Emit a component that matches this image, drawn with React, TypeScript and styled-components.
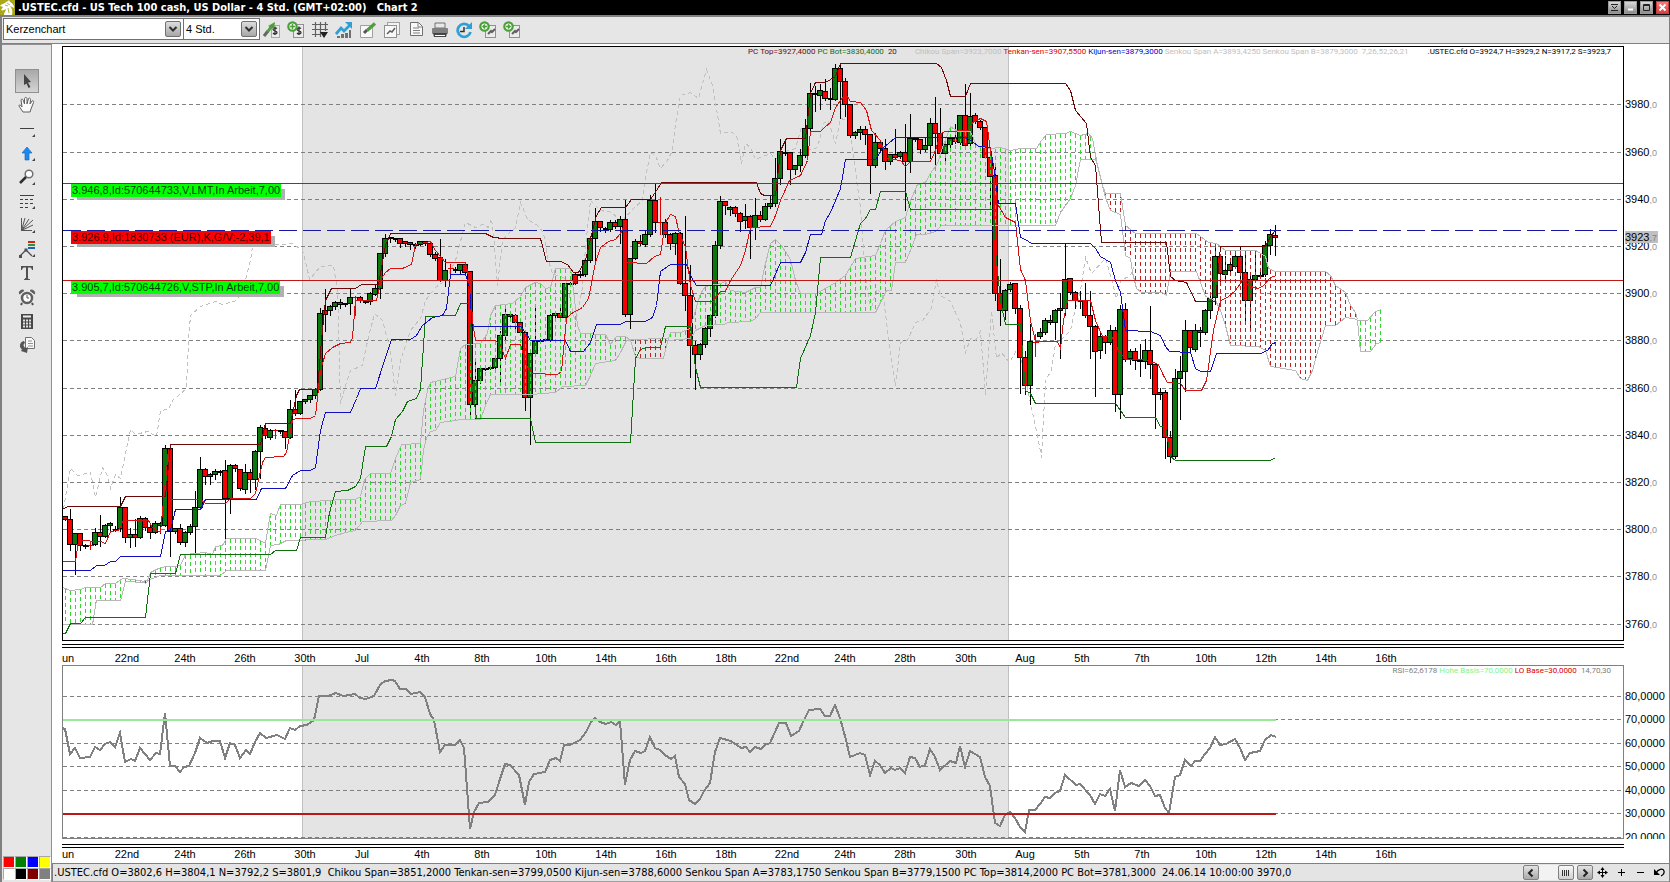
import React from "react";
import styled, { createGlobalStyle, css } from "styled-components";

const GlobalStyle = createGlobalStyle`
  * { box-sizing: border-box; }
  body { margin: 0; background: #ffffff; font-family: "Liberation Sans", Arial, sans-serif; font-size: 11px; color: #000; }
  button, select { font-family: inherit; }
`;

/* ---------- chart data ---------- */

const PLOT_LEFT = 62;
const PRICE_TOP = 46;
const RSI_TOP = 665;
const FIRST_BAR = 65;
const BAR_STEP = 5;

/* high, body top, body bottom, low, kind (u up, d down, x cross); eight bars a line */
const CANDLES = `
515 516 519 519 d|508 519 544 549 d|532 533 544 573 u|532 533 545 549 d|543 545 545 547 u|541 545 545 549 x|527 532 544 544 u|514 532 536 545 d
523 525 536 536 u|521 523 525 530 u|525 529 529 530 u|496 507 528 530 u|507 507 537 541 d|527 534 537 546 u|518 534 537 545 d|515 518 537 537 u
516 518 527 529 d|524 527 532 537 d|520 523 532 532 u|521 523 525 532 u|444 448 525 525 u|447 448 531 555 d|527 528 531 532 u|523 528 542 543 d
530 532 542 545 u|523 526 532 533 u|490 507 526 551 u|456 469 507 507 u|467 469 476 483 d|472 474 476 483 u|468 471 474 478 u|469 471 471 474 u
459 470 498 538 d|463 465 498 512 u|463 465 468 470 d|468 469 488 489 d|463 472 489 492 u|468 472 479 491 d|449 451 479 488 u|424 427 451 477 u
423 428 435 437 d|428 430 437 438 u|428 430 430 438 x|429 430 430 432 u|430 431 437 447 d|399 409 437 437 u|389 409 413 414 d|400 401 413 413 u
398 399 401 402 u|394 395 399 401 u|387 389 395 397 u|307 313 389 389 u|288 310 314 330 d|304 306 310 314 u|300 302 306 308 u|298 302 304 307 d
302 303 304 305 u|288 297 303 313 u|295 297 297 315 x|295 297 300 301 d|299 301 301 302 d|291 293 301 303 u|283 288 294 294 u|252 253 288 297 u
233 238 253 255 u|236 237 237 241 u|237 238 238 240 u|237 238 243 246 d|240 241 243 245 d|241 242 244 248 d|242 244 244 247 u|240 241 244 244 u
240 241 243 244 d|241 243 254 255 d|251 254 258 259 d|238 257 280 280 d|258 270 280 285 u|263 268 268 274 x|266 269 269 271 u|263 264 270 272 u
262 264 272 272 d|271 271 404 416 d|360 380 404 418 u|367 368 380 382 u|367 368 368 369 u|365 367 367 368 u|357 358 367 368 u|330 335 358 382 u
307 314 335 338 u|312 314 316 317 d|313 315 322 327 d|320 322 332 333 d|332 332 397 409 d|352 353 397 443 u|305 341 353 354 u|338 340 340 342 u
337 339 339 340 u|313 315 339 340 u|312 313 315 318 u|303 313 317 317 d|282 283 317 318 u|281 283 283 285 u|271 274 283 283 d|270 274 274 276 u
258 260 274 275 u|237 238 260 261 u|207 221 238 260 u|220 221 227 230 d|226 228 228 231 u|219 222 229 230 u|219 222 226 227 d|215 219 226 242 u
199 219 314 315 d|257 258 314 327 u|238 241 258 258 u|234 241 243 244 d|230 234 244 245 u|194 200 234 235 u|183 200 222 231 d|196 222 222 234 x
218 222 234 236 d|232 234 243 248 d|231 233 243 253 u|231 233 283 283 d|215 283 295 309 d|264 295 345 376 d|340 345 354 388 d|342 344 354 358 u
326 328 344 346 u|313 315 328 335 u|240 245 315 316 u|195 201 245 247 u|200 201 205 213 d|205 207 209 214 u|205 207 213 215 d|211 213 221 230 d
203 216 220 227 u|214 216 227 257 d|197 215 227 238 u|210 215 219 220 d|202 206 219 219 u|194 203 206 207 u|157 178 203 205 u|138 151 178 183 u
138 152 152 154 d|151 152 169 183 d|164 165 169 173 u|148 155 165 170 u|118 128 155 156 u|82 93 128 132 u|85 93 93 110 u|83 90 95 108 u
78 91 98 99 d|87 98 98 108 u|63 68 99 99 u|63 68 81 117 d|77 81 104 115 d|103 104 135 136 d|130 132 135 137 u|125 129 132 138 u
125 129 134 143 d|134 134 165 192 d|132 142 165 166 u|140 142 148 149 d|138 148 161 168 d|153 154 161 163 u|128 154 157 158 d|150 152 156 157 u
123 152 161 209 d|113 138 161 171 u|136 138 138 140 u|138 139 149 152 d|137 145 149 150 u|117 123 145 157 u|96 123 133 163 d|107 133 153 153 d
142 144 153 161 u|135 138 144 146 u|123 138 141 142 d|114 115 142 143 u|83 115 145 148 d|92 116 143 144 u|112 115 121 122 d|119 121 127 128 d
126 127 157 157 d|155 157 176 203 d|163 175 293 299 d|258 293 310 324 d|288 290 310 318 u|281 284 289 290 u|282 283 308 312 d|304 308 357 392 d
350 357 385 393 d|323 341 385 403 u|333 342 342 356 x|327 332 336 337 u|317 320 332 333 u|314 320 322 323 d|308 310 322 338 u|292 308 310 357 u
242 279 308 314 u|278 278 292 293 d|290 292 300 307 d|290 300 300 307 u|282 300 315 316 d|290 315 326 357 d|324 326 351 395 d|330 336 350 357 u
334 336 342 352 d|324 330 342 343 u|326 330 394 410 d|304 309 394 417 u|302 309 359 360 d|348 351 358 363 u|347 351 360 368 d|343 360 361 375 u
338 350 361 367 u|305 350 364 377 d|362 364 394 427 d|387 392 394 398 u|389 392 437 457 d|430 437 456 461 d|368 378 456 457 u|355 371 378 418 u
319 330 371 390 u|329 330 347 352 d|323 330 349 350 u|326 330 332 345 d|308 310 332 333 u|295 298 310 317 u|243 256 297 303 u|255 256 273 283 d
255 270 274 277 u|260 264 270 272 u|254 256 266 267 u|245 256 272 277 d|254 272 300 321 d|274 279 300 327 u|254 275 279 281 u|268 275 275 276 u
240 245 274 275 u|228 234 245 253 u|224 235 237 254 d
`;

type Candle = { x: number; high: number; top: number; bottom: number; low: number; kind: string };

const candles: Candle[] = CANDLES.trim()
  .split(/[\n|]/)
  .map((row, i) => {
    const [high, top, bottom, low, kind] = row.trim().split(" ");
    return { x: FIRST_BAR + i * BAR_STEP, high: +high, top: +top, bottom: +bottom, low: +low, kind };
  });

const PC_TOP =
  "62,509 67,506 120,506 125,496 165,496 170,444 260,444 265,423 290,423 296,395 299,389 317,389 321,340 325,300 331,288 355,288 361,284 378,284 385,245 390,233 485,233 493,237 503,238 540,238 546,261 560,261 567,264 573,272 578,272 585,260 590,238 596,215 601,207 625,207 631,199 650,199 658,187 661,182 756,182 760,193 764,195 775,195 780,150 786,138 805,138 810,93 815,82 825,82 835,76 840,63 936,63 941,67 946,80 950,96 965,96 970,83 1065,83 1070,90 1075,110 1086,123 1090,157 1095,165 1101,242 1166,242 1170,276 1175,280 1186,282 1195,301 1215,301 1220,246 1265,246 1270,236 1275,230";
const PC_BOT =
  "62,633 65,633 70,623 80,623 85,617 145,617 150,573 175,573 180,554 270,554 275,550 296,550 300,537 325,537 329,512 335,491 347,490 355,486 360,478 365,446 386,446 391,436 395,419 402,411 407,401 416,398 420,389 425,316 455,315 460,303 469,303 471,380 476,418 530,418 535,442 630,442 635,358 640,349 646,347 660,347 665,326 690,326 695,367 700,387 796,387 800,358 810,335 815,312 820,257 850,257 855,240 860,223 865,218 870,209 875,209 880,191 905,191 910,209 993,209 995,250 1000,300 1005,324 1020,324 1025,390 1030,393 1035,403 1115,403 1120,410 1125,417 1155,417 1160,426 1165,427 1170,456 1175,460 1270,460 1275,457";
const TENKAN =
  "62,561 75,561 78,540 100,541 105,543 110,531 118,530 122,521 127,520 148,520 152,527 160,532 163,500 168,449 170,499 200,499 205,503 225,503 230,498 250,498 255,493 262,462 265,457 283,456 286,452 292,420 295,418 310,418 315,415 320,370 325,353 332,347 340,343 350,342 352,337 355,300 376,300 381,278 385,272 390,268 402,268 411,264 415,244 430,241 435,250 445,262 465,262 470,285 472,320 475,340 495,340 500,345 505,358 510,344 520,344 526,365 532,373 557,374 561,371 566,318 571,313 582,307 588,298 595,262 600,247 608,241 615,239 620,233 624,225 626,262 646,263 654,256 660,254 665,222 670,214 675,216 678,230 685,247 690,285 695,301 712,301 716,296 720,291 725,291 730,280 740,265 745,250 750,227 770,226 775,215 780,200 789,180 800,175 807,160 810,131 820,131 825,126 830,122 835,107 845,93 850,101 860,102 866,110 871,130 880,140 886,158 900,160 905,166 910,161 930,161 935,150 940,133 945,131 968,130 972,122 980,118 986,121 990,150 995,200 1005,217 1015,222 1020,269 1025,280 1030,320 1035,341 1057,341 1060,348 1063,320 1067,300 1090,300 1095,320 1102,336 1112,337 1118,350 1125,359 1145,359 1158,364 1163,375 1167,382 1180,383 1185,390 1201,390 1206,380 1213,330 1220,300 1227,297 1235,290 1242,280 1250,286 1258,288 1263,285 1270,277 1276,275";
const KIJUN =
  "62,570 90,570 96,565 104,565 110,561 115,561 120,556 160,556 165,531 170,530 175,509 200,509 205,499 256,499 261,488 285,488 292,475 300,470 310,470 315,467 320,430 325,412 350,412 356,398 360,388 375,388 384,360 391,339 410,339 416,335 422,325 432,317 442,315 446,308 450,274 465,274 470,290 471,326 520,326 525,332 530,340 565,340 570,351 583,351 590,342 596,324 620,324 625,321 645,321 652,317 656,305 660,271 670,264 686,264 690,275 696,285 770,285 780,262 800,262 805,252 810,234 821,234 825,220 830,212 835,200 840,188 845,159 875,159 882,148 895,137 965,137 972,141 978,146 990,147 993,165 998,203 1015,203 1020,237 1025,239 1031,243 1090,243 1095,248 1100,256 1110,262 1115,280 1120,292 1125,330 1150,331 1160,335 1165,346 1169,351 1190,352 1195,368 1200,371 1210,371 1216,353 1260,353 1267,350 1272,343 1276,342";
const CHIKOU =
  "62,515 66,490 70,468 77,475 90,472 95,497 102,467 107,475 110,488 115,474 120,478 125,453 130,429 135,434 147,431 156,436 160,410 168,409 172,400 186,388 188,340 190,315 200,306 215,301 222,304 236,300 243,287 250,260 252,246 280,244 292,243 302,250 306,265 309,279 320,266 333,265 337,290 340,403 345,385 350,370 362,365 366,345 374,313 382,320 390,350 395,395 400,360 410,330 420,318 425,300 435,287 445,280 455,260 465,222 475,227 482,224 488,227 491,218 494,245 497,285 502,240 508,233 515,227 520,202 527,219 537,225 543,232 547,257 552,273 565,278 575,323 582,287 585,247 590,200 600,210 612,212 620,222 633,208 642,200 645,177 650,152 655,155 660,168 667,160 672,150 675,123 680,95 690,92 698,98 706,69 712,85 715,102 720,133 730,131 736,135 741,163 745,143 750,147 755,159 770,153 775,159 781,152 795,148 801,127 807,150 817,147 823,123 828,120 835,143 840,118 848,120 853,157 860,207 865,277 870,310 877,288 883,297 888,337 895,385 900,342 907,340 915,322 922,320 931,308 936,279 940,295 950,301 960,323 965,352 970,338 975,340 980,331 985,395 991,310 996,358 1001,352 1009,362 1016,350 1022,363 1030,403 1037,435 1041,457 1045,380 1051,370 1055,343 1060,340 1070,330 1075,308 1080,290 1085,257 1091,273 1105,258 1110,275 1116,298 1120,280 1130,275 1133,267";

type Cloud = { bullish: boolean; upper: string; lower: string };

const CLOUDS: Cloud[] = [
  {
    bullish: true,
    upper: "62,587 70,590 80,589 85,587 100,587 105,583 115,583 122,578 132,579 145,581",
    lower: "62,624 92,624 96,600 120,600 125,581 144,582",
  },
  { bullish: false, upper: "143,580 147,580", lower: "143,581 145,583 147,581" },
  {
    bullish: true,
    upper:
      "147,580 150,572 158,568 165,566 175,566 180,565 185,554 205,552 212,554 215,546 222,545 226,538 255,538 262,541 265,543 270,513 276,515 280,504 300,504 310,501 330,500 340,499 355,499 360,496 364,479 370,473 390,473 395,458 401,444 420,443 423,410 427,390 430,382 455,376 460,348 465,344 480,343 487,333 490,315 495,305 512,303 520,296 525,287 535,282 540,283 545,288 550,287 555,268 570,268 573,290 577,325 580,333 605,334 610,344 616,336 625,336 630,340",
    lower:
      "147,580 160,575 220,575 226,570 265,570 270,545 278,544 286,540 325,539 335,535 345,532 355,530 362,521 391,520 395,515 400,505 405,503 410,482 420,479 423,450 426,437 430,431 435,430 440,422 455,420 460,419 480,419 485,405 490,394 530,394 555,392 562,386 585,385 590,375 595,363 615,360 620,352 626,340 630,340",
  },
  { bullish: false, upper: "630,339 665,338 668,338", lower: "630,340 635,356 640,358 663,358 668,338" },
  {
    bullish: true,
    upper:
      "668,338 670,332 680,332 690,328 695,310 700,293 705,286 720,283 725,281 730,290 745,292 755,287 760,287 764,267 770,243 775,239 780,244 785,251 790,259 795,280 800,293 816,293 825,288 835,282 845,275 855,258 875,255 880,243 885,230 895,221 905,217 910,200 917,184 925,182 930,173 937,163 942,147 950,126 957,131 970,131 976,145 990,148 1000,147 1010,150 1020,148 1036,148 1041,140 1046,134 1065,133 1070,131 1080,135 1088,133 1092,138 1097,165",
    lower:
      "668,340 690,338 695,330 705,325 723,324 728,322 750,321 755,318 760,312 875,312 880,302 886,290 891,290 895,262 905,262 912,245 916,234 925,234 935,231 941,225 1055,225 1060,212 1070,198 1075,185 1080,159 1095,159 1097,165",
  },
  {
    bullish: false,
    upper:
      "1097,165 1102,185 1105,193 1120,193 1125,225 1135,233 1196,233 1208,242 1216,243 1225,250 1255,250 1262,254 1265,256 1268,268 1275,271 1325,271 1330,275 1335,285 1345,292 1350,305 1355,312 1357,319",
    lower:
      "1097,165 1105,197 1110,210 1120,214 1125,255 1130,258 1132,272 1136,288 1141,292 1162,292 1166,295 1170,271 1196,271 1205,296 1215,300 1220,310 1225,325 1230,345 1258,346 1265,350 1270,366 1295,370 1300,378 1307,380 1312,370 1318,348 1325,325 1335,325 1345,317 1357,319",
  },
  {
    bullish: true,
    upper: "1357,320 1367,320 1375,311 1381,309",
    lower: "1357,320 1360,351 1370,351 1376,343 1381,342",
  },
];

const RSI =
  "62,728 65,729 70,754 75,748 80,758 90,757 95,747 100,750 105,744 110,742 115,747 120,733 125,762 131,759 135,761 140,748 145,754 150,760 156,753 160,754 165,713 170,766 175,766 180,772 184,767 189,766 195,753 200,738 207,743 213,741 220,741 225,758 230,743 235,745 240,758 246,750 250,754 255,742 260,733 266,738 277,735 285,739 290,728 295,730 300,726 307,725 314,720 319,696 328,696 336,693 343,696 355,694 360,698 366,699 374,696 380,685 385,681 392,680 395,681 400,689 406,689 411,694 420,692 425,697 430,714 434,720 440,752 445,745 455,745 460,740 464,748 470,829 474,812 479,803 488,802 495,795 500,779 505,764 510,765 519,775 525,805 529,782 534,774 545,772 550,760 556,758 560,761 564,745 570,745 580,740 586,732 591,722 595,718 600,722 606,724 611,722 616,725 620,721 625,785 630,760 635,751 641,753 645,751 650,737 655,748 660,750 665,755 671,759 675,756 679,777 685,784 689,800 695,804 700,799 704,791 710,783 715,752 720,738 731,741 741,748 746,747 750,752 755,747 761,749 765,745 770,743 779,723 786,723 791,736 799,731 804,720 809,710 820,709 825,716 830,716 835,705 840,718 846,740 850,757 860,753 865,755 870,775 875,761 880,765 885,773 891,768 895,770 900,768 905,773 910,757 915,758 920,767 925,765 930,749 935,757 940,770 950,761 956,763 960,746 965,767 970,751 980,757 985,777 990,786 995,823 1000,826 1005,815 1010,812 1015,818 1020,827 1025,832 1029,810 1035,810 1040,804 1045,797 1050,798 1055,793 1060,791 1065,775 1076,785 1080,784 1090,795 1095,804 1100,794 1105,796 1110,789 1115,811 1120,770 1125,787 1131,783 1139,786 1145,780 1150,786 1155,796 1160,795 1165,808 1169,813 1175,777 1180,775 1185,760 1191,766 1195,761 1200,761 1205,754 1210,748 1215,737 1220,745 1226,744 1235,739 1240,748 1245,760 1250,753 1260,751 1265,740 1271,735 1276,737";

const PRICE_TICKS: [string, number][] = [
  ["3980", 104], ["3960", 152], ["3940", 199], ["3920", 246], ["3900", 293], ["3880", 340],
  ["3860", 388], ["3840", 435], ["3820", 482], ["3800", 529], ["3780", 576], ["3760", 624],
];
const RSI_TICKS: [string, number][] = [
  ["80,0000", 696], ["70,0000", 719], ["60,0000", 743], ["50,0000", 766], ["40,0000", 790], ["30,0000", 813], ["20,0000", 837],
];
const DATE_TICKS: [string, number][] = [
  ["un", 68], ["22nd", 127], ["24th", 185], ["26th", 245], ["30th", 305], ["Jul", 362], ["4th", 422], ["8th", 482],
  ["10th", 546], ["14th", 606], ["16th", 666], ["18th", 726], ["22nd", 787], ["24th", 845], ["28th", 905],
  ["30th", 966], ["Aug", 1025], ["5th", 1082], ["7th", 1142], ["10th", 1206], ["12th", 1266], ["14th", 1326], ["16th", 1386],
];

const parsePoints = (s: string) => s.split(" ").map((p) => p.split(",").map(Number));

const valueAt = (pts: number[][], x: number) => {
  for (let i = 1; i < pts.length; i++) {
    const [x0, y0] = pts[i - 1];
    const [x1, y1] = pts[i];
    if (x >= x0 && x <= x1) return x1 === x0 ? y1 : y0 + ((y1 - y0) * (x - x0)) / (x1 - x0);
  }
  return null;
};

/* ---------- window chrome ---------- */

const Window = styled.div`
  min-height: 100vh;
  display: flex;
  flex-direction: column;
  background: #fff;
  overflow: hidden;
`;

const TitleBar = styled.header`
  height: 15px;
  display: flex;
  align-items: center;
  gap: 3px;
  background: #000;
  color: #fff;
`;

const Title = styled.h1`
  flex: 1;
  margin: 0;
  font-family: "DejaVu Sans Condensed", "DejaVu Sans", sans-serif;
  font-stretch: condensed;
  font-size: 11px;
  line-height: 15px;
  font-weight: bold;
  white-space: pre;
`;

const WindowButtons = styled.div`
  display: flex;
  gap: 3px;
  padding-right: 1px;
`;

const WindowButton = styled.button<{ $danger?: boolean }>`
  width: 13px;
  height: 13px;
  padding: 0;
  display: grid;
  place-items: center;
  border: 1px solid ${(p) => (p.$danger ? "#c43c3c" : "#9a9a9a")};
  background: ${(p) => (p.$danger ? "linear-gradient(#f08080, #d84040)" : "linear-gradient(#d8d8d8, #8c8c8c)")};
`;

const Toolbar = styled.div`
  height: 29px;
  display: flex;
  align-items: flex-start;
  background: #e6e6e6;
  border: 2px solid #808080;
  border-right-width: 1px;
  border-bottom-width: 1px;
  padding: 1px 0 0 1px;
`;

const SelectBox = styled.div<{ $width: number }>`
  position: relative;
  width: ${(p) => p.$width}px;
  height: 22px;
  border: 1px solid #707070;
  margin-right: -1px;
  background: #fff;
`;

const Select = styled.select`
  appearance: none;
  width: 100%;
  height: 20px;
  border: 0;
  padding: 0 20px 0 2px;
  background: transparent;
  font-size: 11px;
  line-height: 20px;
  color: #000;
  border-radius: 0;
`;

const SelectArrow = styled.span`
  position: absolute;
  right: 2px;
  top: 2px;
  width: 16px;
  height: 16px;
  display: grid;
  place-items: center;
  border: 1px solid #707070;
  border-radius: 2px;
  background: linear-gradient(#dcdcdc, #a8a8a8);
  pointer-events: none;
`;

const ToolButtons = styled.div`
  display: flex;
  padding-left: 1px;
`;

const ToolButton = styled.button<{ $active?: boolean }>`
  width: 24px;
  height: 24px;
  padding: 0;
  display: grid;
  place-items: center;
  border: 1px solid transparent;
  background: none;
  ${(p) =>
    p.$active &&
    css`
      border-color: #909090;
      background: linear-gradient(#a8a8a8, #d4d4d4);
    `}
`;

const Body = styled.div`
  flex: 1;
  display: flex;
  border-left: 2px solid #808080;
  border-right: 1px solid #808080;
`;

const Rail = styled.aside`
  width: 50px;
  flex: none;
  display: flex;
  flex-direction: column;
  justify-content: space-between;
  background: #e6e6e6;
  border-right: 1px solid #909090;
  border-top: 1px solid #909090;
`;

const RailTools = styled.div`
  display: flex;
  flex-direction: column;
  align-items: center;
  padding-top: 24px;
`;

const Palette = styled.div`
  display: grid;
  grid-template-columns: repeat(4, 12px);
  padding: 0 0 2px 1px;
`;

const Swatch = styled.button<{ $color: string }>`
  height: 12px;
  padding: 0;
  border: 1px solid #a8a8a8;
  border-right-color: #fff;
  border-bottom-color: #fff;
  background: ${(p) => p.$color};
`;

const Main = styled.main`
  flex: 1;
  min-width: 0;
  display: flex;
  flex-direction: column;
`;

const Charts = styled.div`
  flex: 1;
  padding: 2px 0 0 10px;
`;

const Pane = styled.section`
  display: grid;
  grid-template-columns: minmax(0, 1fr) 45px;
`;

const PlotArea = styled.div<{ $height: number; $line: string }>`
  position: relative;
  height: ${(p) => p.$height}px;
  border: 1px solid ${(p) => p.$line};
`;

const PlotSvg = styled.svg`
  display: block;
  width: 100%;
  height: 100%;
`;

const AxisSvg = styled.svg`
  display: block;
  width: 45px;
  height: 100%;
`;

const Splitter = styled.div<{ $gap: number }>`
  height: 4px;
  margin: ${(p) => p.$gap}px 45px 0 0;
  border-top: 1px solid #000;
  border-bottom: 1px solid #000;
`;

const DateSvg = styled.svg<{ $height: number }>`
  display: block;
  width: 100%;
  height: ${(p) => p.$height}px;
`;

const Legend = styled.div`
  position: absolute;
  top: 0;
  right: 12px;
  display: flex;
  gap: 2px;
  font-family: Roboto, "Liberation Sans", sans-serif;
  font-size: 8px;
  line-height: 10px;
  white-space: pre;
`;

const LegendItem = styled.span<{ $color: string; $space?: number }>`
  color: ${(p) => p.$color};
  margin-left: ${(p) => p.$space ?? 0}px;
`;

const OrderTag = styled.button<{ $top: number; $color: string }>`
  position: absolute;
  left: 8px;
  top: ${(p) => p.$top}px;
  height: 13px;
  padding: 0 1px;
  border: 0;
  background: ${(p) => p.$color};
  box-shadow: 5px 4px 0 -1px #b0b0b0;
  font-size: 11px;
  line-height: 13px;
  white-space: nowrap;
  color: rgba(0, 0, 0, 0.8);
`;

const StatusBar = styled.footer`
  height: 19px;
  display: flex;
  align-items: center;
  border-top: 1px solid #808080;
  border-left: 1px solid #808080;
  border-bottom: 1px solid #a0a0a0;
  background: #e4e4e4;
`;

const StatusText = styled.div`
  flex: 1;
  padding-left: 1px;
  font-family: "DejaVu Sans Condensed", "DejaVu Sans", sans-serif;
  font-stretch: condensed;
  font-size: 11px;
  line-height: 17px;
  white-space: pre;
  overflow: hidden;
`;

const ScrollBar = styled.div`
  display: flex;
  align-items: center;
  width: 70px;
  height: 15px;
  background: #f2f2f2;
`;

const ScrollButton = styled.button`
  width: 16px;
  height: 15px;
  padding: 0;
  display: grid;
  place-items: center;
  border: 1px solid #808080;
  border-radius: 2px;
  background: linear-gradient(#e4e4e4, #a8a8a8);
`;

const ScrollThumb = styled(ScrollButton)`
  margin: 0 3px 0 auto;
  background: linear-gradient(#f8f8f8, #d0d0d0);
`;

const StatusButton = styled.button`
  width: 19px;
  height: 17px;
  padding: 0;
  display: grid;
  place-items: center;
  border: 0;
  background: none;
`;

/* ---------- icons ---------- */

const Icon = ({ size = 18, children }: { size?: number; children: React.ReactNode }) => (
  <svg width={size} height={size} viewBox={`0 0 ${size} ${size}`} fill="none" aria-hidden="true">
    {children}
  </svg>
);

const Caret = () => (
  <Icon size={10}>
    <path d="M1.500 3 L5 6.500 L8.500 3" stroke="#303030" strokeWidth="2" />
  </Icon>
);

const More = () => <path d="M17 14v3h-3z" fill="#404040" />;

const Sheet = () => <rect x="6.500" y="4.500" width="10" height="12" fill="#ececec" stroke="#909090" />;

const Dollar = () => (
  <path
    d="M14 7.500c-1-1-4-1-4 .8 0 2 4 1.200 4 3.200 0 1.800-3 1.800-4 .5M12 5.500v8.500"
    stroke="#333"
    strokeWidth="1.300"
  />
);

const GreenRing = ({ children }: { children?: React.ReactNode }) => (
  <>
    <circle cx="5.500" cy="5.500" r="4.200" fill="#f4faf0" stroke="#4ca03c" strokeWidth="2.200" />
    {children}
  </>
);

const toolbarIcons: [string, React.ReactNode][] = [
  ["Order", <><rect x="8.500" y="4.500" width="8" height="12" fill="#ececec" stroke="#aaa" /><Dollar /><path d="M1 15l4-5" stroke="#666" strokeWidth="3" /><path d="M4.500 11L8 6" stroke="#4ca03c" strokeWidth="3" /><path d="M5 5l7-4-1 7z" fill="#4ca03c" /></>],
  ["Add order", <><rect x="6.500" y="3.500" width="10" height="13" fill="#ececec" stroke="#909090" /><Dollar /><GreenRing><path d="M5.500 3v5M3 5.500h5" stroke="#4ca03c" strokeWidth="1.500" /></GreenRing></>],
  ["Grid", <><path d="M4.500 1v15M9.500 1v15M14.500 1v9M1 3.500h16M1 8.500h16M1 13.500h9" stroke="#606060" strokeWidth="1.200" /><path d="M9 11h8l-4 6z" fill="#222" /></>],
  ["Indicators", <><path d="M2 17v-2h3v2zM6 17v-4h3v4zM10 17v-5h3v5zM14 17V9h2v8z" fill="#707070" /><path d="M1 13l5-6 3 3 6-6" stroke="#2f9fd8" strokeWidth="2.800" /><path d="M10 1h7v7z" fill="#2f9fd8" /></>],
  ["Edit", <><path d="M1.500 4.500h12v12h-12z" fill="#f8f8f8" stroke="#a0a0a0" /><path d="M5 12l3-3" stroke="#555" strokeWidth="3" /><path d="M8 9.500l8-7" stroke="#4ca03c" strokeWidth="3.200" /></>],
  ["Charts", <><rect x="4.500" y="1.500" width="12" height="12" fill="#f2f2f2" stroke="#a0a0a0" /><rect x="1.500" y="4.500" width="12" height="12" fill="#f8f8f8" stroke="#909090" /><path d="M4 13l3-3 2 1 3-4" stroke="#606060" strokeWidth="1.500" /></>],
  ["Copy", <><path d="M3.500 1.500h8l4 4v9h-12z" fill="#f8f8f8" stroke="#707070" /><path d="M11 2v4h4M6 7h6M6 9.500h7M6 12h7" stroke="#808080" /></>],
  ["Print", <><path d="M4 2h10v5H4z" fill="#e8e8e8" stroke="#707070" /><rect x="1" y="7" width="16" height="6" rx="1" fill="#808080" /><path d="M2 12h14l-1 4H3z" fill="#444" /><path d="M4 14.500h10" stroke="#fff" /></>],
  ["Refresh", <><path d="M14 5a6.500 6.500 0 1 0 1.500 6" stroke="#2f9fd8" strokeWidth="2.800" /><path d="M17 1v7h-7z" fill="#2f9fd8" /><path d="M9 6v4.500H5" stroke="#333" strokeWidth="1.500" /></>],
  ["Add chart", <><Sheet /><path d="M9 13l3-3 1 1 3-3" stroke="#606060" strokeWidth="2" /><GreenRing><path d="M8 5.500H4M6 3.500l-2 2 2 2" stroke="#4ca03c" strokeWidth="1.500" /></GreenRing></>],
  ["Next chart", <><Sheet /><path d="M9 13l3-3 1 1 3-3" stroke="#606060" strokeWidth="2" /><GreenRing><path d="M3 5.500h4M5 3.500l2 2-2 2" stroke="#4ca03c" strokeWidth="1.500" /></GreenRing></>],
];

const railIcons: [string, React.ReactNode][] = [
  ["Pointer", <path d="M6 2l7 8-3 .5 2.500 4.500-2 1-2-4.500L6 13z" fill="#444" />],
  ["Hand", <path d="M5 16l-4-6c0-2 2-1 3 1L3 4c.5-1.500 2-1 2.500 1l1 3L6.500 2.500C7 1 8.500 1 9 2.500V8l1.500-5.500C11 1.500 12.500 2 12.500 3.500L12 8l2-3c1-1 2 0 1.500 1.500L13 13l-1 3z" fill="#fafafa" stroke="#606060" />],
  ["Line", <><path d="M2 8.500h14" stroke="#404040" /><More /></>],
  ["Arrow", <><path d="M9 3l5 6h-3v7H7V9H4z" fill="#1e88ee" stroke="#1560b8" strokeWidth=".6" /><More /></>],
  ["Zoom", <><circle cx="11" cy="6" r="3.800" fill="#fff" stroke="#707070" strokeWidth="1.500" /><path d="M8 9l-6 6" stroke="#303030" strokeWidth="2.500" /><More /></>],
  ["Levels", <><path d="M2 3.500h14" stroke="#404040" /><path d="M2 7.500h14M2 11.500h14M2 15.500h10" stroke="#404040" strokeDasharray="3 2" /><More /></>],
  ["Fan", <><path d="M3.500 2v12.500H14M3.500 14.500L7 2M3.500 14.500L11 3M3.500 14.500L15 4M3.500 14.500L15 9" stroke="#555" /><More /></>],
  ["Pattern", <><path d="M10 1h7v2h-7z" fill="#d82020" /><path d="M10 4h7v2h-7z" fill="#209840" /><path d="M10 7h7v2h-7z" fill="#2060c0" /><path d="M2 16l6-6 6 6" stroke="#505050" strokeWidth="1.300" /><path d="M1 15h3v3H1zM6.500 8.500h3v3h-3z" fill="#505050" /><More /></>],
  ["Text", <path d="M3 2h12v4h-1c-.5-2-1-2.500-3-2.500H10V14c0 1 .5 1 2 1.200V16H6v-.8c1.500-.2 2-.2 2-1.200V3.500H7C5 3.500 4.500 4 4 6H3z" fill="#505050" />],
  ["Alarm", <><circle cx="9" cy="10" r="5" fill="#fff" stroke="#606060" strokeWidth="2.500" /><path d="M9 7v3h2" stroke="#505050" /><path d="M1.500 6A3 3 0 0 1 6 2.500zM16.500 6A3 3 0 0 0 12 2.500z" fill="#606060" stroke="#606060" /><path d="M4 15l-1 2M14 15l1 2" stroke="#505050" strokeWidth="2" /></>],
  ["Calculator", <><rect x="3" y="2" width="12" height="15" fill="#484848" /><path d="M5 4.500h8" stroke="#eee" strokeWidth="2" /><path d="M5 8.500h8M5 11.500h8M5 14.500h8" stroke="#e4e4e4" strokeWidth="1.800" strokeDasharray="2 1" /></>],
  ["Export", <><path d="M7.500 1.500h6l3 3v8h-9z" fill="#f8f8f8" stroke="#707070" /><path d="M10 5h4M10 7.500h5M10 10h5" stroke="#909090" /><path d="M6 5C1 6 1 12 4 13l-1 2 6 2 1-6-2 1C5 11 5 8 7 7z" fill="#555" /></>],
];

/* ---------- charts ---------- */

const GridLines = ({ ticks, top }: { ticks: [string, number][]; top: number }) => (
  <g stroke="#808080" strokeDasharray="4 3" shapeRendering="crispEdges">
    {ticks.map(([label, y]) => (
      <line key={label} x1="0" x2="100%" y1={y - top - 0.5} y2={y - top - 0.5} />
    ))}
  </g>
);

const MonthBand = () => (
  <g shapeRendering="crispEdges">
    <rect x={239} y="0" width={707} height="100%" fill="#e4e4e4" />
    <rect x={239} y="0" width="1" height="100%" fill="#c0c0c0" />
    <rect x={945} y="0" width="1" height="100%" fill="#c0c0c0" />
  </g>
);

const CandleMark = ({ c }: { c: Candle }) => {
  if (c.kind === "x")
    return <path d={`M${c.x} ${c.high}V${c.low}M${c.x - 3} ${c.top}H${c.x + 3}`} stroke="#e00000" />;
  return (
    <g stroke="#000">
      <path d={`M${c.x} ${c.high}V${c.low + 1}`} />
      {c.bottom - c.top < 1 ? (
        <path d={`M${c.x - 3} ${c.top}H${c.x + 3}`} strokeWidth="2" />
      ) : (
        <rect x={c.x - 3} y={c.top} width="5" height={c.bottom - c.top} fill={c.kind === "u" ? "#0a780a" : "#f80000"} />
      )}
    </g>
  );
};

const CloudShape = ({ cloud }: { cloud: Cloud }) => {
  const upper = parsePoints(cloud.upper);
  const lower = parsePoints(cloud.lower);
  const hatch: string[] = [];
  for (let x = 65; x <= 1385; x += BAR_STEP) {
    const a = valueAt(upper, x);
    const b = valueAt(lower, x);
    if (a !== null && b !== null && Math.abs(b - a) > 1) hatch.push(`M${x} ${Math.round(a)}V${Math.round(b)}`);
  }
  return (
    <>
      <path d={hatch.join("")} stroke={cloud.bullish ? "#30d830" : "#c02020"} strokeDasharray="4 3" />
      <polyline points={cloud.upper} stroke="#b8b8b8" />
      <polyline points={cloud.lower} stroke="#b8b8b8" />
    </>
  );
};

const PricePlot = () => (
  <PlotSvg role="img" aria-label="Kerzenchart">
    <MonthBand />
    <GridLines ticks={PRICE_TICKS} top={PRICE_TOP} />
    <g shapeRendering="crispEdges" fill="none" transform={`translate(${-PLOT_LEFT - 0.5} ${-PRICE_TOP - 0.5})`}>
      <polyline points={CHIKOU} stroke="#c0c0c0" strokeDasharray="4 3" />
      {candles.map((c) => (
        <CandleMark key={c.x} c={c} />
      ))}
      {CLOUDS.map((cloud, i) => (
        <CloudShape key={i} cloud={cloud} />
      ))}
      <polyline points={PC_BOT} stroke="#107010" />
      <polyline points={PC_TOP} stroke="#700808" />
      <polyline points={KIJUN} stroke="#1010c0" />
      <polyline points={TENKAN} stroke="#d81010" />
    </g>
    <g shapeRendering="crispEdges">
      <line x1="0" x2="100%" y1="136.500" y2="136.500" stroke="#c01818" />
      <line x1="0" x2="100%" y1="233.500" y2="233.500" stroke="#c01818" />
      <line x1="0" x2="100%" y1="183.500" y2="183.500" stroke="#1818a8" strokeDasharray="18 6" />
    </g>
  </PlotSvg>
);

const RsiPlot = () => (
  <PlotSvg role="img" aria-label="RSI">
    <MonthBand />
    <GridLines ticks={RSI_TICKS} top={RSI_TOP} />
    <g shapeRendering="crispEdges" fill="none" strokeWidth="2" transform={`translate(${-PLOT_LEFT - 1} ${-RSI_TOP - 1})`}>
      <polyline points={RSI} stroke="#808080" />
      <path d="M62 720H1276" stroke="#98e898" />
      <path d="M62 814H1276" stroke="#b81818" />
    </g>
  </PlotSvg>
);

const PriceAxis = () => (
  <AxisSvg>
    {PRICE_TICKS.map(([label, y]) => (
      <text key={label} x="1" y={y - PRICE_TOP + 4} fontSize="11">
        {label}
        <tspan fill="#909090" fontSize="9">,0</tspan>
      </text>
    ))}
    <rect x="1" y="185" width="33" height="12" fill="#c0c0c0" />
    <text x="1" y="195" fontSize="11">
      3923<tspan fill="#808080" fontSize="9">,7</tspan>
    </text>
  </AxisSvg>
);

const RsiAxis = () => (
  <AxisSvg>
    {RSI_TICKS.map(([label, y]) => (
      <text key={label} x="1" y={y - RSI_TOP + 4} fontSize="11">
        {label}
      </text>
    ))}
  </AxisSvg>
);

const DateAxis = ({ height, baseline }: { height: number; baseline: number }) => (
  <DateSvg $height={height}>
    {DATE_TICKS.map(([label, x]) => (
      <text key={x} x={x - PLOT_LEFT} y={baseline} fontSize="11" textAnchor="middle">
        {label}
      </text>
    ))}
  </DateSvg>
);

const PRICE_LEGEND: [string, string, number][] = [
  ["PC Top=3927,4000", "#700808", 0],
  ["PC Bot=3830,4000", "#107010", 0],
  ["20", "#700808", 2],
  ["Chikou Span=3923,7000", "#c0c0c0", 16],
  ["Tenkan-sen=3907,5500", "#e00000", 0],
  ["Kijun-sen=3879,3000", "#0000d0", 0],
  ["Senkou Span A=3893,4250", "#c0c0c0", 0],
  ["Senkou Span B=3879,3000", "#c0c0c0", 0],
  ["7,26,52,26,21", "#c0c0c0", 2],
  [".USTEC.cfd O=3924,7 H=3929,2 N=3917,2 S=3923,7", "#000000", 17],
];

const RSI_LEGEND: [string, string, number][] = [
  ["RSI=62,6178", "#808080", 0],
  ["Hohe Basis=70,0000", "#88f088", 0],
  ["LO Base=30,0000", "#d80000", 0],
  ["14,70,30", "#808080", 2],
];

const LegendRow = ({ items }: { items: [string, string, number][] }) => (
  <Legend>
    {items.map(([text, color, space]) => (
      <LegendItem key={text} $color={color} $space={space}>
        {text}
      </LegendItem>
    ))}
  </Legend>
);

const SWATCHES = ["#ff0000", "#008000", "#0000ff", "#ffff00", "#ffffff", "#000000", "#800000", "#808080"];

const STATUS =
  ".USTEC.cfd O=3802,6 H=3804,1 N=3792,2 S=3801,9  Chikou Span=3851,2000 Tenkan-sen=3799,0500 Kijun-sen=3788,6000 Senkou Span A=3783,1750 Senkou Span B=3779,1500 PC Top=3814,2000 PC Bot=3781,3000  24.06.14 10:00:00 3970,0";

export default function App() {
  return (
    <Window>
      <GlobalStyle />
      <TitleBar>
        <Icon size={15}>
          <rect width="15" height="15" fill="#a8a818" />
          <path d="M0 6C2 3 5 4 6 2l2-1 1-1 1 2c3 1 4 4 4 6l-2-1-2-1c2 2 3 5 2 9H4c0-3 2-4 2-6-2 1-3 2-5 1l2-3z" fill="#fff" />
          <path d="M7 3l3 2M5 5l3 1M8 8l1 5" stroke="#b8b838" />
        </Icon>
        <Title>{".USTEC.cfd - US Tech 100 cash, US Dollar - 4 Std. (GMT+02:00)   Chart 2"}</Title>
        <WindowButtons>
          <WindowButton aria-label="Roll up"><Icon size={9}><path d="M1 1.500h7M1 7.500h7M2 3l2.500 2.500L7 3" stroke="#222" /></Icon></WindowButton>
          <WindowButton aria-label="Minimize"><Icon size={9}><path d="M2 6.500h5" stroke="#fff" strokeWidth="2" /></Icon></WindowButton>
          <WindowButton aria-label="Maximize"><Icon size={9}><path d="M1.500 1.500h6v6h-6zM1 2.500h7" stroke="#222" /></Icon></WindowButton>
          <WindowButton aria-label="Close" $danger><Icon size={9}><path d="M1.500 1.500l6 6M7.500 1.500l-6 6" stroke="#fff" strokeWidth="2" /></Icon></WindowButton>
        </WindowButtons>
      </TitleBar>
      <Toolbar>
        <SelectBox $width={181}>
          <Select aria-label="Charttyp" defaultValue="Kerzenchart"><option>Kerzenchart</option></Select>
          <SelectArrow><Caret /></SelectArrow>
        </SelectBox>
        <SelectBox $width={77}>
          <Select aria-label="Zeitraum" defaultValue="4 Std."><option>4 Std.</option></Select>
          <SelectArrow><Caret /></SelectArrow>
        </SelectBox>
        <ToolButtons>
          {toolbarIcons.map(([label, icon]) => (
            <ToolButton key={label} aria-label={label}><Icon>{icon}</Icon></ToolButton>
          ))}
        </ToolButtons>
      </Toolbar>
      <Body>
        <Rail>
          <RailTools>
            {railIcons.map(([label, icon], i) => (
              <ToolButton key={label} aria-label={label} $active={i === 0}><Icon>{icon}</Icon></ToolButton>
            ))}
          </RailTools>
          <Palette>
            {SWATCHES.map((color) => (
              <Swatch key={color} $color={color} aria-label={color} />
            ))}
          </Palette>
        </Rail>
        <Main>
          <Charts>
            <Pane>
              <PlotArea $height={595} $line="#000">
                <PricePlot />
                <LegendRow items={PRICE_LEGEND} />
                <OrderTag $top={137} $color="#00ff00">3.946,8,Id:570644733,V,LMT,In Arbeit,7,00</OrderTag>
                <OrderTag $top={184} $color="#ff0000">3.926,9,Id:1830733 (EUR),K,G/V:-2,39,1</OrderTag>
                <OrderTag $top={234} $color="#00ff00">3.905,7,Id:570644726,V,STP,In Arbeit,7,00</OrderTag>
              </PlotArea>
              <PriceAxis />
            </Pane>
            <Splitter $gap={3} />
            <DateAxis height={17} baseline={14} />
            <Pane>
              <PlotArea $height={174} $line="#808080">
                <RsiPlot />
                <LegendRow items={RSI_LEGEND} />
              </PlotArea>
              <RsiAxis />
            </Pane>
            <Splitter $gap={5} />
            <DateAxis height={15} baseline={10} />
          </Charts>
          <StatusBar>
            <StatusText>{STATUS}</StatusText>
            <ScrollBar>
              <ScrollButton aria-label="Scroll left"><Icon size={10}><path d="M6.500 1.500L3 5l3.500 3.500" stroke="#222" strokeWidth="2" /></Icon></ScrollButton>
              <ScrollThumb aria-label="Scroll position"><Icon size={10}><path d="M1.500 2v6M3.500 2v6M5.500 2v6M7.500 2v6" stroke="#333" /></Icon></ScrollThumb>
              <ScrollButton aria-label="Scroll right"><Icon size={10}><path d="M3.500 1.500L7 5l-3.500 3.500" stroke="#222" strokeWidth="2" /></Icon></ScrollButton>
            </ScrollBar>
            <StatusButton aria-label="Move"><Icon size={11}><path d="M5.500 1v9M1 5.500h9" stroke="#000" /><path d="M3.500 3l2-3 2 3zM3.500 8l2 3 2-3zM3 3.500l-3 2 3 2zM8 3.500l3 2-3 2z" fill="#000" /></Icon></StatusButton>
            <StatusButton aria-label="Zoom in"><Icon size={11}><path d="M5.500 2v7M2 5.500h7" stroke="#000" /></Icon></StatusButton>
            <StatusButton aria-label="Zoom out"><Icon size={11}><path d="M2 5.500h7" stroke="#000" /></Icon></StatusButton>
            <StatusButton aria-label="Undo"><Icon size={11}><path d="M0 2v6h6z" fill="#000" /><path d="M2 6c2-4 7-5 8-2 .5 2-1 4-3 5" stroke="#000" strokeWidth="1.200" /></Icon></StatusButton>
          </StatusBar>
        </Main>
      </Body>
    </Window>
  );
}
